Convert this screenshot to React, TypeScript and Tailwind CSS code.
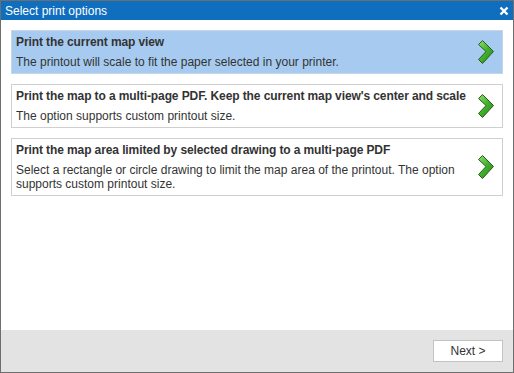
const options = [
  {
    title: 'Print the current map view',
    desc: 'The printout will scale to fit the paper selected in your printer.',
    selected: true,
  },
  {
    title: "Print the map to a multi-page PDF. Keep the current map view's center and scale",
    desc: 'The option supports custom printout size.',
    selected: false,
  },
  {
    title: 'Print the map area limited by selected drawing to a multi-page PDF',
    desc: 'Select a rectangle or circle drawing to limit the map area of the printout. The option supports custom printout size.',
    selected: false,
  },
]

function Chevron() {
  return (
    <svg width="20" height="26" viewBox="0 0 20 26" className="shrink-0">
      <defs>
        <linearGradient id="chev" x1="0" y1="0" x2="1" y2="1">
          <stop offset="0" stopColor="#8fe070" />
          <stop offset="0.5" stopColor="#3fb02a" />
          <stop offset="1" stopColor="#2a8a1a" />
        </linearGradient>
      </defs>
      <path
        d="M2.5 5.5 L6.5 1.5 L17.5 12.5 L6.5 24.5 L2.5 20.5 L10 12.5 Z"
        fill="url(#chev)"
        stroke="#2d5a1e"
        strokeWidth="1"
        strokeLinejoin="round"
      />
    </svg>
  )
}

export default function App() {
  return (
    <div
      className="flex h-[373px] w-[514px] flex-col border border-[#6e6e6e] bg-white text-[12px] text-[#333]"
      style={{ fontFamily: '"Liberation Sans", Arial, sans-serif' }}
    >
      <div className="flex h-[19px] items-center justify-between bg-[#0f6ebe] pl-[4px] pr-[4px] text-white">
        <span className="text-[12px] leading-none">Select print options</span>
        <svg width="10" height="10" viewBox="0 0 10 10">
          <path d="M1.5 1.5 L8.5 8.5 M8.5 1.5 L1.5 8.5" stroke="#fff" strokeWidth="2.4" />
        </svg>
      </div>
      <div className="flex flex-1 flex-col gap-[10px] px-[10px] pt-[10px]">
        {options.map((o) => (
          <div
            key={o.title}
            className={
              o.selected
                ? 'flex items-center border border-[#c6d6e6] bg-[#a7cbf0] pl-[4px] pr-[6px] pt-[3px] pb-[4px]'
                : 'flex items-center border border-[#cfcfcf] bg-white pl-[4px] pr-[6px] pt-[3px] pb-[4px]'
            }
          >
            <div className="min-w-0 flex-1">
              <div className="whitespace-nowrap font-bold leading-[16px] tracking-[-0.1px]">{o.title}</div>
              <div className="mt-[5px] leading-[14px]">{o.desc}</div>
            </div>
            <Chevron />
          </div>
        ))}
      </div>
      <div className="flex h-[42px] items-center justify-end bg-[#e3e3e3] pr-[10px]">
        <button className="h-[22px] w-[70px] border border-[#c3c3c3] bg-white text-[12px] text-[#333]">
          Next &gt;
        </button>
      </div>
    </div>
  )
}
